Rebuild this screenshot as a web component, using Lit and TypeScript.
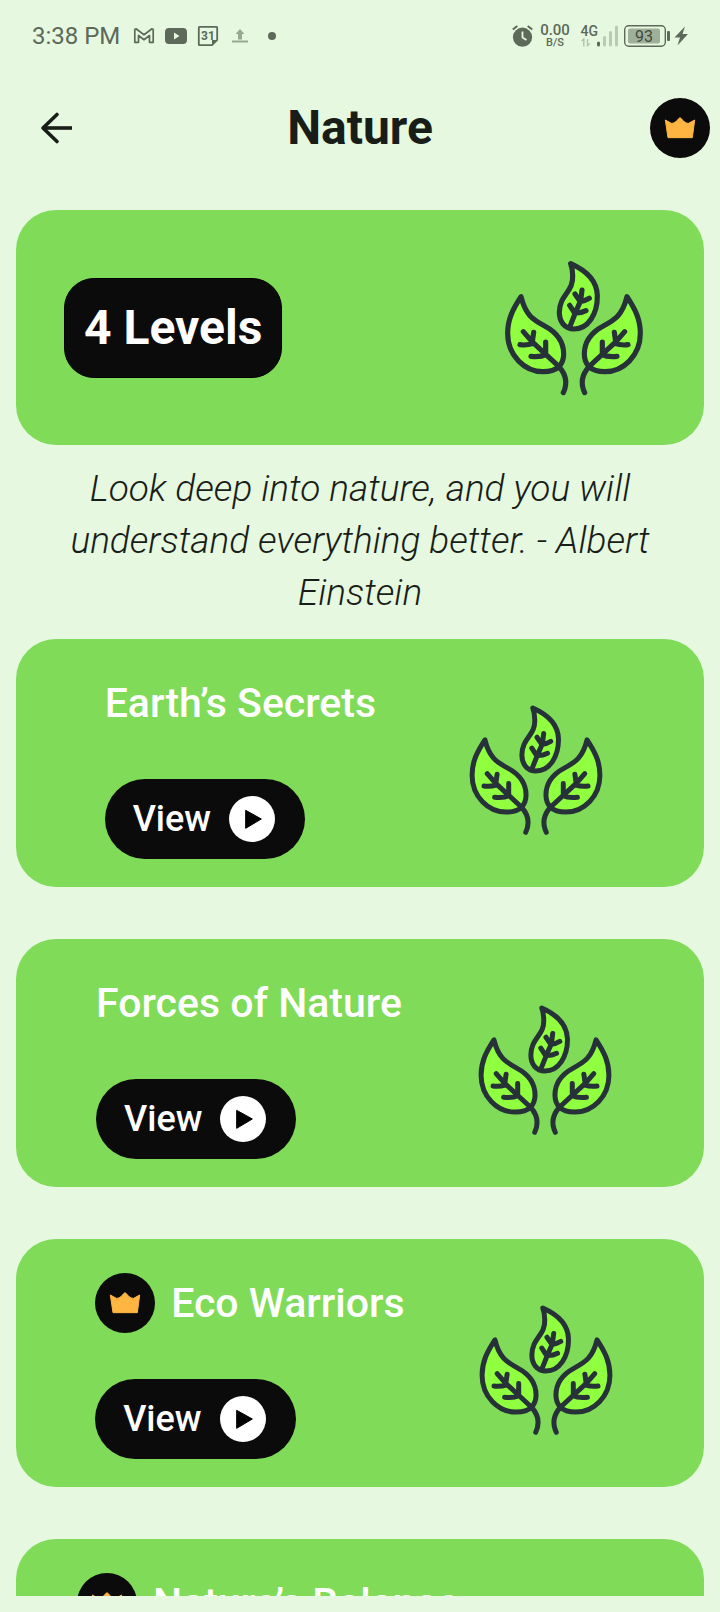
import { LitElement, html, css, svg, nothing } from "lit";
import { customElement, property } from "lit/decorators.js";

const leafHalf = svg`
  <path class="leaf" d="M124 168C100 205 84 235 84 278C84 345 135 393 190 393C212 393 228 388 238 378C250 365 252 350 252 340C252 300 225 272 195 256C160 237 138 224 124 168Z"/>
  <path class="vein" d="M131 273L157 303L238 378C258 400 264 428 251 456M162 275L158 303M121 312Q140 315 162 308M198 304V339M154 347Q182 350 199 342"/>`;

@customElement("leaf-icon")
class LeafIcon extends LitElement {
  static styles = css`
    :host { display: block; flex: none; }
    svg { display: block; width: 100%; height: 100%; }
    .leaf { fill: #90ff40; }
    .leaf, .vein { stroke: #263238; stroke-width: 15.500; stroke-linecap: round; stroke-linejoin: round; }
    .vein { fill: none; }
  `;
  render() {
    return html`<svg viewBox="37 16 492 492" aria-hidden="true">
      <path class="leaf" d="M273 69C325 92 352 125 353 165C354 220 325 265 283 265C255 265 239 243 239 215C240 160 282 155 279 105C279 90 277 80 273 69Z"/>
      <path class="vein" d="M271 257L288 214L303 180L307 148M286 160L301 182M329 173Q314 182 301 183M270 194L285 217M319 210Q303 218 287 217"/>
      ${leafHalf}
      <g transform="translate(566 0) scale(-1 1)">${leafHalf}</g>
    </svg>`;
  }
}

@customElement("crown-badge")
class CrownBadge extends LitElement {
  static styles = css`
    :host { display: block; flex: none; width: 60px; height: 60px; }
    svg { display: block; width: 100%; height: 100%; }
  `;
  render() {
    return html`<svg viewBox="0 0 180 180" role="img" aria-label="Premium">
      <circle cx="90" cy="90" r="90" fill="#0b0b0b"/>
      <path d="M46 66L64 76Q72 77 79 70L87 61Q90 58 93 61L101 70Q108 77 116 76L134 66L127 119H54Z" fill="#ffb541" stroke="#ffb541" stroke-width="3" stroke-linejoin="round"/>
    </svg>`;
  }
}

@customElement("level-card")
class LevelCard extends LitElement {
  @property() name = "";
  @property({ type: Boolean }) premium = false;

  static styles = css`
    :host {
      display: flex; justify-content: space-around; align-items: center; flex: none;
      padding: 34px 48px 28px; border-radius: 40px; background: #7fdb58;
    }
    .info { display: flex; flex-direction: column; align-items: flex-start; gap: 46px; }
    .heading { display: flex; align-items: center; gap: 16px; height: 60px; }
    .name { margin: 0; font-size: 41px; line-height: 60px; font-weight: 500; color: #fff; white-space: nowrap; }
    .view {
      display: flex; align-items: center; gap: 18px; height: 80px; padding: 0 30px 0 28px;
      border: 0; border-radius: 40px; background: #0b0b0b; color: #fff;
      font: 500 36px/48px Roboto, sans-serif; cursor: pointer;
    }
    .play { width: 46px; height: 46px; }
    .art { width: 158px; height: 158px; margin-top: 8px; }
  `;
  render() {
    return html`
      <div class="info">
        <div class="heading">
          ${this.premium ? html`<crown-badge></crown-badge>` : nothing}
          <h2 class="name">${this.name}</h2>
        </div>
        <button class="view" aria-label="View ${this.name}">
          <span>View</span>
          <svg class="play" viewBox="0 0 138 138" aria-hidden="true">
            <circle cx="69" cy="69" r="69" fill="#fff"/>
            <path d="M50 43L97 69L50 97Z" fill="#000" stroke="#000" stroke-width="3" stroke-linejoin="round"/>
          </svg>
        </button>
      </div>
      <leaf-icon class="art"></leaf-icon>`;
  }
}

@customElement("status-bar")
class StatusBar extends LitElement {
  static styles = css`
    :host {
      display: flex; align-items: center; justify-content: space-between; flex: none;
      height: 72px; padding: 0 30px 0 32px; color: #5d6959;
    }
    .side { display: flex; align-items: center; }
    .time { font-size: 24px; line-height: 28px; margin-right: 12px; }
    .notices { width: 148px; height: 24px; }
    .alarm { width: 24px; height: 24px; margin-right: 6px; }
    .rate { display: flex; flex-direction: column; align-items: center; width: 30px; margin-right: 10px; font-weight: 500; }
    .amount { font-size: 15px; line-height: 14px; }
    .unit { font-size: 11px; line-height: 12px; }
    .power { width: 110px; height: 24px; }
    text { font-family: Roboto, sans-serif; fill: #5d6959; }
    .day { font-size: 12px; font-weight: 700; }
    .net { font-size: 14px; font-weight: 500; }
    .charge { font-size: 16px; fill: #3f4a3c; }
  `;
  render() {
    return html`
      <div class="side">
        <span class="time">3:38 PM</span>
        <svg class="notices" viewBox="132 24 148 24" fill="none" stroke="#5d6959" aria-hidden="true">
          <path d="M134.800 42.300V29.800Q134.800 28.800 136 28.800L144 34.800L152 28.800Q153.200 28.800 153.200 29.800V42.300H149.500V35.500L144 39.700L138.500 35.500V42.300Z" stroke-width="1.700" stroke-linejoin="round"/>
          <rect x="165" y="28" width="22" height="16" rx="4" fill="#5d6959" stroke="none"/>
          <path d="M174 32.500V39.500L179.500 36Z" fill="#e6f8e0" stroke="none"/>
          <path d="M199.500 26.800H216.500Q217.200 26.800 217.200 27.500V40L212 45.200H199.500Q198.800 45.200 198.800 44.500V27.500Q198.800 26.800 199.500 26.800Z" stroke-width="1.800"/>
          <path d="M212 45V40H217Z" fill="#5d6959" stroke="none"/>
          <text class="day" x="201" y="40" stroke="none">31</text>
          <path d="M240 29L244.500 34H242V39.500H238V34H235.500ZM232 40.500H248V42.500H232Z" fill="#98a993" stroke="none"/>
          <circle cx="272" cy="36" r="4" fill="#5d6959" stroke="none"/>
        </svg>
      </div>
      <div class="side">
        <svg class="alarm" viewBox="510 24 24 24" aria-hidden="true">
          <circle cx="522.500" cy="37.200" r="9.600" fill="#5d6959"/>
          <path d="M512.800 29.500L517.300 26M532.200 29.500L527.700 26" stroke="#5d6959" stroke-width="2"/>
          <path d="M522.500 31.500V37.500L526.500 40" fill="none" stroke="#e6f8e0" stroke-width="1.800"/>
        </svg>
        <div class="rate"><span class="amount">0.00</span><span class="unit">B/S</span></div>
        <svg class="power" viewBox="580 24 110 24" aria-hidden="true">
          <text class="net" x="580.500" y="36">4G</text>
          <path d="M581.500 41L583.800 39V46.500M587.500 39V45.500L590 43.500" fill="none" stroke="#b3c6ad" stroke-width="1.500"/>
          <g stroke-width="3" stroke-linecap="round">
            <path d="M598.500 43V45" stroke="#5d6959"/>
            <path d="M604.500 37.500V45M610.500 32.500V45M616.500 27V45" stroke="#b9ccb3"/>
          </g>
          <rect x="624.700" y="25.700" width="40.600" height="20.600" rx="4" fill="none" stroke="#5d6959" stroke-width="1.400"/>
          <rect x="628" y="28.500" width="32" height="15" rx="2" fill="#9fb09a"/>
          <text class="charge" x="635" y="41.500">93</text>
          <rect x="667" y="31" width="3" height="10" rx="1" fill="#5d6959"/>
          <path d="M685 26.500L674.500 37.500H680L677.500 45.500L688 34H682.500Z" fill="#5d6959"/>
        </svg>
      </div>`;
  }
}

const levels = [
  { name: "Earth’s Secrets", premium: false },
  { name: "Forces of Nature", premium: false },
  { name: "Eco Warriors", premium: true },
  { name: "Nature’s Balance", premium: true },
];

@customElement("app-root")
class AppRoot extends LitElement {
  static styles = css`
    :host {
      display: flex; flex-direction: column; box-sizing: border-box; height: 100vh;
      padding-bottom: 16px; overflow: hidden; background: #e6f8e0; color: #191d17;
      font-family: Roboto, sans-serif;
    }
    .bar { display: grid; grid-template-columns: 1fr auto 1fr; align-items: center; flex: none; height: 112px; padding: 0 10px; }
    .back { width: 48px; height: 48px; margin-left: 22px; padding: 0; border: 0; background: none; cursor: pointer; }
    .back svg { display: block; }
    .title { margin: 0; font-size: 48px; line-height: 56px; font-weight: 700; }
    .crown { justify-self: end; }
    .content { flex: 1; min-height: 0; overflow: hidden auto; scrollbar-width: none; padding: 26px 16px 0; }
    .hero { display: flex; align-items: center; justify-content: space-between; height: 235px; box-sizing: border-box; padding: 0 48px; border-radius: 40px; background: #7fdb58; }
    .count { box-sizing: border-box; padding: 21px 19px; border: 1px solid #000; border-radius: 30px; background: #0b0b0b; color: #fff; font-size: 48px; line-height: 56px; font-weight: 700; white-space: nowrap; }
    .hero-art { width: 164px; height: 164px; }
    .quote { margin: 18px 32px 20px; font-size: 37px; line-height: 52px; font-weight: 300; font-style: italic; text-align: center; }
    .levels { display: flex; flex-direction: column; gap: 52px; }
  `;
  render() {
    return html`
      <status-bar></status-bar>
      <header class="bar">
        <button class="back" aria-label="Back">
          <svg width="48" height="48" viewBox="0 0 48 48" fill="none" stroke="#191d17" stroke-width="3.600" aria-hidden="true">
            <path d="M40 24H11"/>
            <path d="M25 10.500L11 24L25 37.500" stroke-linejoin="round" stroke-linecap="round"/>
          </svg>
        </button>
        <h1 class="title">Nature</h1>
        <crown-badge class="crown"></crown-badge>
      </header>
      <main class="content">
        <section class="hero">
          <div class="count">4 Levels</div>
          <leaf-icon class="hero-art"></leaf-icon>
        </section>
        <p class="quote">Look deep into nature, and you will understand everything better. - Albert Einstein</p>
        <div class="levels">
          ${levels.map((l) => html`<level-card .name=${l.name} .premium=${l.premium}></level-card>`)}
        </div>
      </main>`;
  }
}
